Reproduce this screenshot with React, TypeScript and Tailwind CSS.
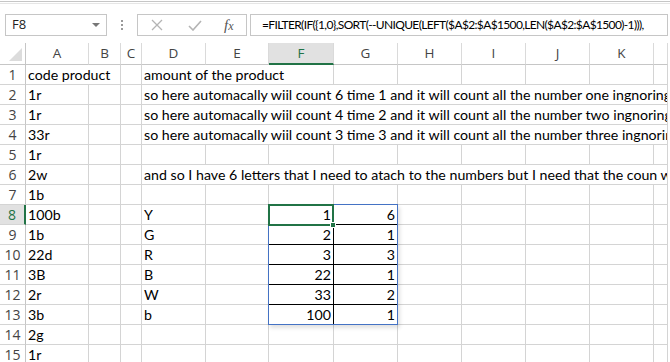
import React from "react";

type Col = { k: string; w: string };
const COLS: Col[] = [
  { k: "A", w: "w-[63px]" },
  { k: "B", w: "w-[32px]" },
  { k: "C", w: "w-[21px]" },
  { k: "D", w: "w-[64px]" },
  { k: "E", w: "w-[63px]" },
  { k: "F", w: "w-[65px]" },
  { k: "G", w: "w-[64px]" },
  { k: "H", w: "w-[64px]" },
  { k: "I", w: "w-[64px]" },
  { k: "J", w: "w-[64px]" },
  { k: "K", w: "w-[64px]" },
  { k: "L", w: "w-[14px]" },
];

type Row = {
  n: number;
  a?: string;
  d?: string;
  span?: "F" | "end";
  f?: string;
  g?: string;
};

const ROWS: Row[] = [
  { n: 1, a: "code product", d: "amount of the product", span: "F" },
  { n: 2, a: "1r", d: "so here automacally wiil count 6 time 1 and it will count all the number one ingnoring", span: "end" },
  { n: 3, a: "1r", d: "so here automacally wiil count 4 time 2 and it will count all the number two ingnoring", span: "end" },
  { n: 4, a: "33r", d: "so here automacally wiil count 3 time 3 and it will count all the number three ingnoring", span: "end" },
  { n: 5, a: "1r" },
  { n: 6, a: "2w", d: "and so I have 6 letters that I need to atach to the numbers but I need that the coun will", span: "end" },
  { n: 7, a: "1b" },
  { n: 8, a: "100b", d: "Y", f: "1", g: "6" },
  { n: 9, a: "1b", d: "G", f: "2", g: "1" },
  { n: 10, a: "22d", d: "R", f: "3", g: "3" },
  { n: 11, a: "3B", d: "B", f: "22", g: "1" },
  { n: 12, a: "2r", d: "W", f: "33", g: "2" },
  { n: 13, a: "3b", d: "b", f: "100", g: "1" },
  { n: 14, a: "2g" },
  { n: 15, a: "1r" },
];

const cellFont = { fontFamily: "Lato, 'Liberation Sans', sans-serif" };

function Cell({
  w,
  children,
  right,
  borderR = "border-r-[#d4d4d4]",
  borderB = "border-b-[#d4d4d4]",
}: {
  w: string;
  children?: React.ReactNode;
  right?: boolean;
  borderR?: string;
  borderB?: string;
}) {
  return (
    <div
      className={`${w} h-[20px] shrink-0 box-border border-r border-b ${borderR} ${borderB} overflow-hidden whitespace-nowrap leading-[19px] text-[14.2px] text-black ${
        right ? "text-right pr-[2px]" : "pl-[2px]"
      }`}
    >
      {children}
    </div>
  );
}

function GridRow({ r }: { r: Row }) {
  const sel = r.n === 8;
  const inTable = r.n >= 8 && r.n <= 13;
  const aboveTable = r.n === 7;
  return (
    <div className="flex h-[20px]">
      <div
        className={`w-[26px] h-[20px] shrink-0 box-border border-b border-b-[#d4d4d4] ${
          sel ? "bg-[#e1e1e1] text-[#217346] border-r-2 border-r-[#217346]" : "border-r border-r-[#c6c6c6] text-[#444]"
        } text-center leading-[19px] text-[14px]`}
        style={{ fontFamily: "'Open Sans', 'Noto Sans', sans-serif" }}
      >
        {r.n}
      </div>
      <div className="flex" style={cellFont}>
        {r.n === 1 ? (
          <Cell w="w-[95px]">{r.a}</Cell>
        ) : (
          <>
            <Cell w="w-[63px]">{r.a}</Cell>
            <Cell w="w-[32px]" />
          </>
        )}
        <Cell w="w-[21px]" />
        {r.span === "F" && (
          <>
            <Cell w="w-[192px]">{r.d}</Cell>
            {COLS.slice(6).map((c) => (
              <Cell key={c.k} w={c.w} />
            ))}
          </>
        )}
        {r.span === "end" && <Cell w="w-[526px]">{r.d}</Cell>}
        {!r.span && (
          <>
            <Cell w="w-[64px]">{r.d}</Cell>
            <Cell w="w-[63px]" borderR={inTable ? "border-r-black" : "border-r-[#d4d4d4]"} />
            <Cell
              w="w-[65px]"
              right
              borderR={inTable ? "border-r-black" : "border-r-[#d4d4d4]"}
              borderB={inTable || aboveTable ? "border-b-black" : "border-b-[#d4d4d4]"}
            >
              {r.f}
            </Cell>
            <Cell
              w="w-[64px]"
              right
              borderR={inTable ? "border-r-black" : "border-r-[#d4d4d4]"}
              borderB={inTable || aboveTable ? "border-b-black" : "border-b-[#d4d4d4]"}
            >
              {r.g}
            </Cell>
            {COLS.slice(7).map((c) => (
              <Cell key={c.k} w={c.w} />
            ))}
          </>
        )}
      </div>
    </div>
  );
}

export default function App() {
  return (
    <div className="w-[670px] h-[362px] overflow-hidden bg-white relative">
      {/* top lines */}
      <div className="h-[1px] bg-white" />
      <div className="h-[1px] bg-[#c6c6c6]" />
      <div className="h-[1px] bg-white" />
      <div className="h-[1px] bg-[#e6e6e6]" />
      {/* formula bar */}
      <div className="h-[39px] flex items-start pt-[10px]">
        <div
          className="ml-[5px] w-[102px] h-[22px] box-border border border-[#c6c6c6] flex items-center justify-between pl-[6px] pr-[6px] text-[13px] text-[#222]"
          style={{ fontFamily: "'Open Sans', 'Noto Sans', sans-serif" }}
        >
          <span>F8</span>
          <svg width="8" height="5" viewBox="0 0 8 5">
            <polygon points="0,0 8,0 4,4" fill="#777" />
          </svg>
        </div>
        <div className="w-[30px] h-[22px] flex flex-col items-center justify-center gap-[2px]">
          <div className="w-[2px] h-[2px] bg-[#9a9a9a]" />
          <div className="w-[2px] h-[2px] bg-[#9a9a9a]" />
          <div className="w-[2px] h-[2px] bg-[#9a9a9a]" />
        </div>
        <div className="w-[110px] h-[22px] box-border border border-[#c6c6c6] flex items-center">
          <svg className="ml-[13px]" width="12" height="12" viewBox="0 0 12 12">
            <path d="M1 1 L11 11 M11 1 L1 11" stroke="#b4b4b4" strokeWidth="1.3" fill="none" />
          </svg>
          <svg className="ml-[25px]" width="14" height="11" viewBox="0 0 14 11">
            <path d="M1 6 L5 10 L13 1" stroke="#b4b4b4" strokeWidth="1.6" fill="none" />
          </svg>
          <span
            className="ml-[22px] italic text-[15px] text-[#555] leading-none"
            style={{ fontFamily: "'Liberation Serif', serif" }}
          >
            f<span className="text-[12px]">x</span>
          </span>
        </div>
        <div
          className="ml-[3px] w-[418px] h-[22px] box-border border border-[#c6c6c6] pl-[11px] text-[12px] tracking-[-0.65px] leading-[20px] text-black whitespace-nowrap overflow-hidden"
          style={cellFont}
        >
          =FILTER(IF({"{"}1,0{"}"},SORT(--UNIQUE(LEFT($A$2:$A$1500,LEN($A$2:$A$1500)-1))),
        </div>
      </div>
      {/* column headers */}
      <div className="flex h-[22px]" style={{ fontFamily: "'Open Sans', 'Noto Sans', sans-serif" }}>
        <div className="w-[26px] h-[22px] shrink-0 box-border border-r border-b border-[#c6c6c6] relative">
          <svg className="absolute left-[9px] top-[5px]" width="14" height="14" viewBox="0 0 14 14">
            <polygon points="13,0 13,13 0,13" fill="#dcdcdc" />
          </svg>
        </div>
        {COLS.map((c) => {
          const sel = c.k === "F";
          return (
            <div
              key={c.k}
              className={`${c.w} h-[22px] shrink-0 box-border border-r border-r-[#dadada] ${
                sel ? "bg-[#e1e1e1] text-[#217346] border-b-2 border-b-[#217346]" : "border-b border-b-[#c6c6c6] text-[#444]"
              } text-center text-[13.5px] leading-[21px] overflow-hidden`}
            >
              {c.k === "L" ? "" : c.k}
            </div>
          );
        })}
      </div>
      {/* rows */}
      <div className="relative">
        {ROWS.map((r) => (
          <GridRow key={r.n} r={r} />
        ))}
        {/* spill range outline */}
        <div className="absolute left-[268px] top-[139px] w-[130px] h-[121px] border border-[#4472c4] shadow-[2px_3px_4px_rgba(0,0,0,0.12)] pointer-events-none" />
        {/* active cell */}
        <div className="absolute left-[268px] top-[139px] w-[66px] h-[22px] border-2 border-[#217346] pointer-events-none" />
        <div className="absolute left-[330px] top-[157px] w-[6px] h-[6px] bg-[#217346] border border-white pointer-events-none" />
      </div>
    </div>
  );
}
